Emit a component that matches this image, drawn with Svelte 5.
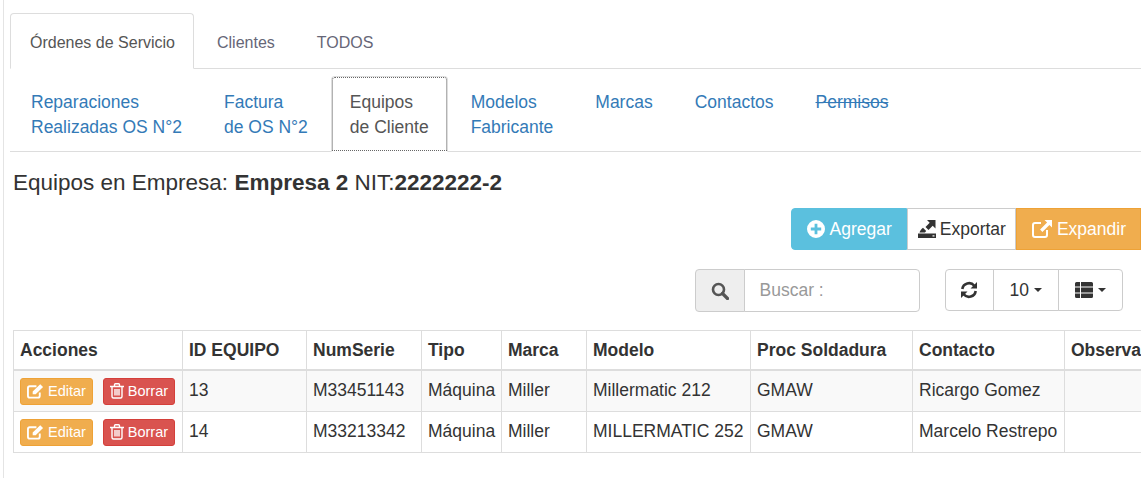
<script>
  const mainTabs = ['Órdenes de Servicio', 'Clientes', 'TODOS']
  const subTabs = [
    { lines: ['Reparaciones', 'Realizadas OS N°2'] },
    { lines: ['Factura', 'de OS N°2'] },
    { lines: ['Equipos', 'de Cliente'], active: true },
    { lines: ['Modelos', 'Fabricante'] },
    { lines: ['Marcas'] },
    { lines: ['Contactos'] },
    { lines: ['Permisos'], struck: true }
  ]
  const columns = [
    { title: 'Acciones', width: 169 },
    { title: 'ID EQUIPO', width: 124 },
    { title: 'NumSerie', width: 115 },
    { title: 'Tipo', width: 80 },
    { title: 'Marca', width: 85 },
    { title: 'Modelo', width: 164 },
    { title: 'Proc Soldadura', width: 162 },
    { title: 'Contacto', width: 152 },
    { title: 'Observaciones', width: 160 }
  ]
  const rows = [
    ['13', 'M33451143', 'Máquina', 'Miller', 'Millermatic 212', 'GMAW', 'Ricargo Gomez', ''],
    ['14', 'M33213342', 'Máquina', 'Miller', 'MILLERMATIC 252', 'GMAW', 'Marcelo Restrepo', '']
  ]
</script>

<div class="page">
  <ul class="tabs main">
    {#each mainTabs as tab, i}
      <li class:active={i === 0}><a href="#top">{tab}</a></li>
    {/each}
  </ul>

  <ul class="tabs sub">
    {#each subTabs as tab}
      <li class:active={tab.active}>
        <a href="#top" class:struck={tab.struck}>
          {#each tab.lines as line}
            <span>{line}</span>
          {/each}
        </a>
      </li>
    {/each}
  </ul>

  <h4 class="title">Equipos en Empresa: <b>Empresa 2</b> NIT:<b>2222222-2</b></h4>

  <div class="actions">
    <button class="btn info">
      <svg viewBox="0 0 18 18" width="18" height="18"><path fill="currentColor" fill-rule="evenodd" d="M9 0a9 9 0 1 0 0 18A9 9 0 0 0 9 0zM7.600 3.800h2.800v3.800h3.800v2.800h-3.800v3.800H7.600v-3.800H3.800V7.600h3.800z" /></svg>
      Agregar
    </button>
    <button class="btn plain">
      <svg viewBox="0 0 18 18" width="18" height="18"><path fill="currentColor" d="M9 0h8.500v8.500l-2.800-2.800-4.200 4.200-3-3 4.200-4.200zM1.500 12.500c.5-1.800 1.800-3.400 3.500-4.700l3.200 3.200c-.4.700-.8 1.100-1.300 1.500zM0 13.500h18V18H0z" /><rect x="14.500" y="15.300" width="2" height="1.200" fill="#fff" /></svg>
      Exportar
    </button>
    <button class="btn warning">
      <svg viewBox="0 0 20 18" width="20" height="18"><path fill="none" stroke="currentColor" stroke-width="2" d="M15 10v5a2 2 0 0 1-2 2H3a2 2 0 0 1-2-2V5a2 2 0 0 1 2-2h6" /><path fill="currentColor" d="M12.500 0H20v7.500l-2.600-2.600-7 7-2.300-2.300 7-7z" /></svg>
      Expandir
    </button>
  </div>

  <div class="toolbar">
    <div class="search">
      <span class="addon">
        <svg viewBox="0 0 18 18" width="18" height="18"><circle cx="7.500" cy="7.500" r="5.500" fill="none" stroke="currentColor" stroke-width="2.600" /><path d="M11.500 11.500l5 5" stroke="currentColor" stroke-width="3.200" stroke-linecap="round" /></svg>
      </span>
      <input type="text" placeholder="Buscar :" />
    </div>
    <div class="group">
      <button>
        <svg viewBox="0 0 18 18" width="18" height="18"><path fill="none" stroke="currentColor" stroke-width="2.600" d="M2.300 8a6.800 6.800 0 0 1 12-3.300M15.700 10a6.800 6.800 0 0 1-12 3.300" /><path fill="currentColor" d="M17 1v6.500h-6.500zM1 17v-6.500h6.500z" /></svg>
      </button>
      <button>10 <i class="caret"></i></button>
      <button>
        <svg viewBox="0 0 18 16" width="18" height="16"><path fill="currentColor" d="M0 1.500A1.500 1.500 0 0 1 1.500 0H5v4.500H0zM6 0h10.500A1.500 1.500 0 0 1 18 1.500v3H6zM0 5.500h5v5H0zM6 5.500h12v5H6zM0 11.500h5V16H1.500A1.500 1.500 0 0 1 0 14.500zM6 11.500h12v3a1.500 1.500 0 0 1-1.500 1.500H6z" /></svg>
        <i class="caret"></i>
      </button>
    </div>
  </div>

  <div class="table-wrap">
    <table>
      <colgroup>
        {#each columns as col}
          <col style="width: {col.width}px" />
        {/each}
      </colgroup>
      <thead>
        <tr>
          {#each columns as col}
            <th>{col.title}</th>
          {/each}
        </tr>
      </thead>
      <tbody>
        {#each rows as row}
          <tr>
            <td class="row-actions">
              <button class="xs warning">
                <svg viewBox="0 0 18 16" width="17" height="16"><path fill="none" stroke="currentColor" stroke-width="2" d="M13.500 9.500V13a2 2 0 0 1-2 2H3a2 2 0 0 1-2-2V5a2 2 0 0 1 2-2h7" /><path fill="currentColor" d="M6 8.500L14 .8l3 3-7.800 7.700H6z" /></svg>
                Editar
              </button>
              <button class="xs danger">
                <svg viewBox="0 0 14 16" width="14" height="16"><path fill="none" stroke="currentColor" stroke-width="1.400" d="M2 4v9.500A1.500 1.500 0 0 0 3.500 15h7a1.500 1.500 0 0 0 1.500-1.500V4M0 3.500h14M4.500 3.500V1.700q0-.9.900-.9h3.200q.9 0 .9.900v1.800M5 6v6.500M7 6v6.500M9 6v6.500" /></svg>
                Borrar
              </button>
            </td>
            {#each row as cell}
              <td>{cell}</td>
            {/each}
          </tr>
        {/each}
      </tbody>
    </table>
  </div>
</div>

<style>
  :global(body) {
    margin: 0;
    background: #fff;
    overflow: hidden;
  }
  .page {
    box-sizing: border-box;
    height: 478px;
    margin-left: 3px;
    padding: 13px 0 0 6px;
    border-left: 1px solid #e4e4e4;
    font-family: 'Liberation Sans', Arial, sans-serif;
    font-size: 17.5px;
    color: #333;
    overflow: hidden;
  }
  .tabs {
    display: flex;
    list-style: none;
    margin: 0;
    padding: 0;
    border-bottom: 1px solid #ddd;
  }
  .tabs li {
    margin-right: 2px;
    margin-bottom: -1px;
  }
  .tabs a {
    display: block;
    border: 1px solid transparent;
    border-radius: 4px 4px 0 0;
    line-height: 24px;
    text-decoration: none;
  }
  .main li {
    margin-right: 3px;
  }
  .main a {
    padding: 17px 18px 13px 19px;
    font-size: 16px;
    color: #667;
  }
  .main .active a {
    color: #555;
    border-color: #ddd #ddd #fff;
  }
  .sub {
    margin-top: 7px;
    padding-left: 1px;
  }
  .sub a {
    height: 50px;
    padding: 13px 19px 11px;
    line-height: 25px;
    color: #337ab7;
  }
  .sub a span {
    display: block;
  }
  .sub .struck {
    text-decoration: line-through;
  }
  .sub .active {
    margin: 0 3px -1px 1px;
  }
  .sub .active a {
    padding-left: 18px;
    padding-right: 18px;
    color: #555;
    border-color: #ddd #ddd #fff;
    outline: 1px dotted #666;
    outline-offset: -2px;
  }
  .title {
    margin: 18px 0 0 3px;
    font-size: 22.5px;
    font-weight: 400;
    line-height: 26px;
    color: #333;
  }
  .actions {
    display: flex;
    justify-content: flex-end;
    margin-top: 12px;
  }
  .btn {
    display: flex;
    align-items: center;
    gap: 5px;
    height: 42px;
    padding: 0 14px 0 15px;
    border: 1px solid;
    font: inherit;
    color: #fff;
  }
  .btn.info {
    background: #5bc0de;
    border-color: #5bc0de;
    border-radius: 4px 0 0 4px;
  }
  .btn.plain {
    gap: 4px;
    padding: 0 9px 0 10px;
    background: #fff;
    border-color: #ccc;
    color: #333;
  }
  .btn.warning {
    background: #f0ad4e;
    border-color: #eea236;
  }
  .toolbar {
    display: flex;
    justify-content: flex-end;
    align-items: flex-start;
    gap: 26px;
    margin-top: 19px;
    margin-right: 18px;
  }
  .search {
    display: flex;
    width: 225px;
    height: 43px;
  }
  .addon {
    display: flex;
    align-items: center;
    justify-content: center;
    box-sizing: border-box;
    width: 50px;
    background: #eee;
    border: 1px solid #ccc;
    border-radius: 4px 0 0 4px;
    color: #555;
  }
  .search input {
    box-sizing: border-box;
    flex: 1;
    min-width: 0;
    margin-left: -1px;
    padding: 0 15px;
    border: 1px solid #ccc;
    border-radius: 0 4px 4px 0;
    font: inherit;
  }
  .search input::placeholder {
    color: #999;
  }
  .group {
    display: flex;
    height: 42px;
  }
  .group button {
    display: flex;
    align-items: center;
    gap: 5px;
    margin-left: -1px;
    padding: 0 16px;
    background: #fff;
    border: 1px solid #ccc;
    font: inherit;
    color: #333;
  }
  .group button:first-child {
    padding: 0 14.5px;
    border-radius: 4px 0 0 4px;
  }
  .group button:last-child {
    border-radius: 0 4px 4px 0;
  }
  .caret {
    display: inline-block;
    border-top: 4px solid;
    border-left: 4px solid transparent;
    border-right: 4px solid transparent;
  }
  .table-wrap {
    margin: 18px 0 0 3px;
    overflow: hidden;
  }
  table {
    table-layout: fixed;
    width: 1211px;
    border-collapse: collapse;
  }
  th,
  td {
    box-sizing: border-box;
    padding: 6px 6px 8px;
    border: 1px solid #ddd;
    line-height: 26px;
    text-align: left;
    white-space: nowrap;
    overflow: hidden;
  }
  th {
    padding: 6px;
    border-bottom-width: 2px;
    font-weight: 700;
  }
  tbody tr:first-child td {
    background: #f9f9f9;
  }
  .row-actions {
    padding: 0 6px;
  }
  .xs {
    display: inline-flex;
    align-items: center;
    gap: 4px;
    height: 27px;
    padding: 0 6px;
    border: 1px solid;
    border-radius: 3px;
    font: inherit;
    font-size: 14.5px;
    color: #fff;
    vertical-align: middle;
  }
  .xs + .xs {
    margin-left: 5px;
  }
  .xs.warning {
    background: #f0ad4e;
    border-color: #eea236;
  }
  .xs.danger {
    background: #d9534f;
    border-color: #d43f3a;
  }
</style>
